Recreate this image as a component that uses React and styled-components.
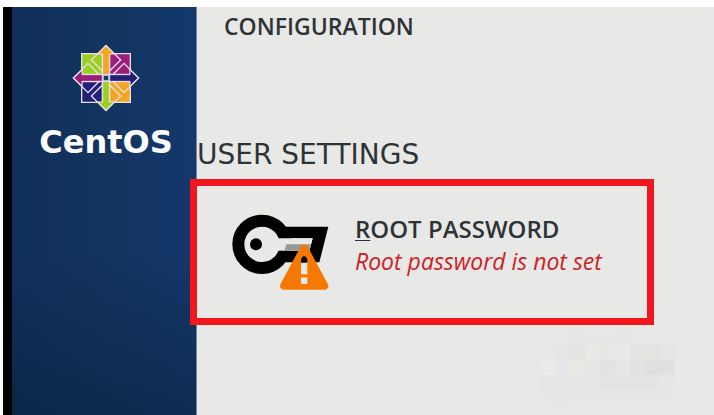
import styled, { createGlobalStyle } from "styled-components";

const GlobalStyle = createGlobalStyle`
  * {
    box-sizing: border-box;
  }

  body {
    margin: 0;
    background-color: white;
    color: #2e3436;
    font-family: "Open Sans", "Noto Sans", sans-serif;
  }
`;

const Container = styled.div`
  min-height: 100vh;
  padding: 7px 0 0 3px;
  display: flex;
`;

const Sidebar = styled.aside`
  flex: 0 0 194px;
  padding: 37px 0 0 4px;
  display: flex;
  flex-direction: column;
  align-items: center;
  border-left: 9px solid black;
  border-right: 1px solid #7386a3;
  background: linear-gradient(to bottom, transparent 60%, rgba(3, 24, 44, 0.4)),
    linear-gradient(to right, #102f5b, #13345f 45%, #14386c);
`;

const Brand = styled.span`
  margin-top: 10px;
  color: white;
  font-family: "DejaVu Sans", sans-serif;
  font-size: 32px;
  font-weight: 700;
  line-height: 40px;
`;

const Main = styled.main`
  flex: 1;
  min-width: 0;
  display: flex;
  flex-direction: column;
  background-color: #e8e8e6;
`;

const SpokeTitle = styled.span`
  display: block;
  font-size: ${(props) => props.$size || "23px"};
  font-weight: 600;
  line-height: 32px;
  white-space: nowrap;
`;

const Configuration = styled.div`
  padding: 3px 27px 0;
`;

const Category = styled.h2`
  margin: 97px 0 0;
  font-family: "DejaVu Sans", sans-serif;
  font-size: 28px;
  font-weight: 400;
  line-height: 32px;
`;

const Highlight = styled.section`
  position: relative;
  margin: 8px 60px 0 -7px;
  padding: 27px 35px 28px;
  border: 7px solid #f1151d;
`;

const Spoke = styled.button`
  display: flex;
  align-items: flex-start;
  gap: 26px;
  padding: 0;
  border: none;
  background: none;
  color: inherit;
  font-family: inherit;
  text-align: left;
  cursor: pointer;
`;

const Mnemonic = styled.span`
  text-decoration: underline;
  text-decoration-thickness: 1px;
  text-underline-offset: 2px;
`;

const Status = styled.span`
  display: block;
  color: #cc2227;
  font-size: 23px;
  font-style: italic;
  line-height: 32px;
  white-space: nowrap;
`;

const Mosaic = styled.svg`
  align-self: flex-end;
  margin: 5px 39px 9px 0;
`;

const mosaicRows = [
  ["", "", "#e6e6e4", "#e7e7e6", "#e6e7e8", "#e6e6e4", "", "", ""],
  ["", "#e6e6e5", "#e4e4e2", "#e9e9e7", "#e7e7e5", "#e9e9e7", "#e3e3e2", "#e3e3e2", "#e5e5e4"],
  ["#eaeae8", "#e5e6e7", "#e8e8e5", "#e5e5e4", "#e2e2e3", "#e6e6e4", "#e2e2e3", "#dfdfdf", "#e0e0de"],
  ["#e5e5e3", "#e5e5e3", "#e5e5e3", "#e6e6e5", "#e3e4e5", "#e4e4e3", "#e3e3e4", "#e4e4e2", "#e6e6e4"],
  ["#e7e7e5", "#e6e6e4", "#e7e7e5", "#e7e7e5", "#e7e7e5", "#e7e7e5", "#e7e7e5", "#e7e7e5", "#e7e7e5"],
];

const arms = [
  { angle: 0, color: "#f4a622" },
  { angle: 90, color: "#252077" },
  { angle: 180, color: "#9bcf22" },
  { angle: 270, color: "#991f7b" },
];

const Logo = () => (
  <svg width="68" height="68" viewBox="-102 -102 204 204" aria-hidden="true">
    <g stroke="#e6e0ea" strokeWidth="4">
      <path fill="#9bcf22" d="M-73-73h62v62h-62z" />
      <path fill="#991f7b" d="M11-73h62v62h-62z" />
      <path fill="#252077" d="M-73 11h62v62h-62z" />
      <path fill="#f4a622" d="M11 11h62v62h-62z" />
    </g>
    {arms.map((arm) => (
      <g key={arm.angle} transform={`rotate(${arm.angle})`}>
        <path
          fill={arm.color}
          stroke="#e6e0ea"
          strokeWidth="3"
          d="M0-98 24-72H10V-11H-10V-72H-24z"
        />
        <path
          fill="none"
          stroke="#e6e0ea"
          strokeWidth="4"
          d="M-10-20-44-54 0-98 44-54 10-20"
        />
      </g>
    ))}
    <path fill="#173c65" stroke="#e6e0ea" strokeWidth="4" d="M-9-9H9V9H-9z" />
  </svg>
);

const KeyWarning = () => (
  <svg width="97" height="77" viewBox="51 42 291 231" aria-hidden="true">
    <circle cx="141" cy="136" r="71" fill="none" stroke="black" strokeWidth="36" />
    <path d="M193 83H340L313 190H193V155H283L293 118H193z" />
    <path fill="#e8e8e6" d="M180 118H293L283 155H180z" />
    <circle cx="123" cy="136" r="18" />
    <path fill="#999997" d="M214 136H288L283 155H208z" />
    <path
      fill="#f57900"
      d="M257 143Q267 132 278 143L338 254Q345 266 333 272H204Q191 268 197 254z"
    />
    <path fill="#e8e8e6" d="M258 180Q267 164 277 180V226H258z" />
    <path d="M258 191V180Q267 162 277 180V191z" />
    <path fill="#e8e8e6" d="M258 235H277V255H258z" />
  </svg>
);

const Watermark = () => (
  <Mosaic width="135" height="75" shapeRendering="crispEdges" aria-hidden="true">
    {mosaicRows.map((row, y) =>
      row.map((color, x) => (
        <rect
          key={`${x}-${y}`}
          x={x * 15}
          y={y * 15}
          width="15"
          height="15"
          fill={color || "none"}
        />
      ))
    )}
  </Mosaic>
);

const App = () => {
  return (
    <>
      <GlobalStyle />
      <Container>
        <Sidebar>
          <Logo />
          <Brand>CentOS</Brand>
        </Sidebar>
        <Main>
          <Configuration>
            <SpokeTitle>CONFIGURATION</SpokeTitle>
          </Configuration>
          <Category>USER SETTINGS</Category>
          <Highlight>
            <Spoke type="button">
              <KeyWarning />
              <span>
                <SpokeTitle $size="24px">
                  <Mnemonic>R</Mnemonic>OOT PASSWORD
                </SpokeTitle>
                <Status>Root password is not set</Status>
              </span>
            </Spoke>
          </Highlight>
          <Watermark />
        </Main>
      </Container>
    </>
  );
};

export default App;
